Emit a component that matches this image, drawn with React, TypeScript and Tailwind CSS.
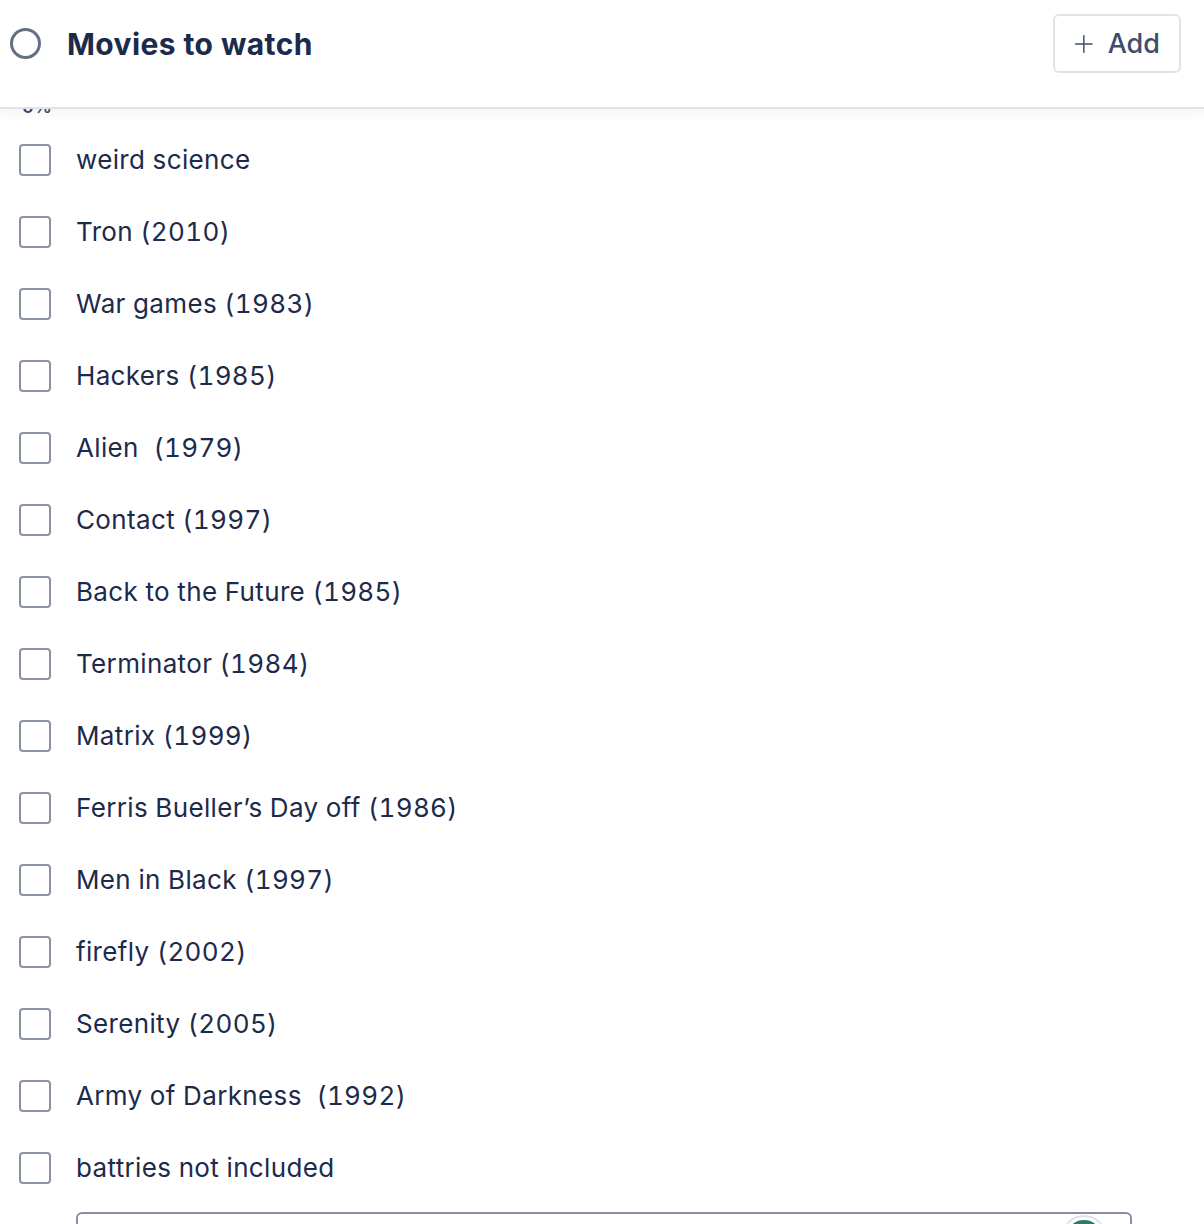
import React from 'react';

const movies = [
  'weird science',
  'Tron (2010)',
  'War games (1983)',
  'Hackers (1985)',
  'Alien  (1979)',
  'Contact (1997)',
  'Back to the Future (1985)',
  'Terminator (1984)',
  'Matrix (1999)',
  'Ferris Bueller\u2019s Day off (1986)',
  'Men in Black (1997)',
  'firefly (2002)',
  'Serenity (2005)',
  'Army of Darkness  (1992)',
  'battries not included',
];

const App: React.FC = () => {
  return (
    <div className="min-h-screen bg-white text-[#1c2a4b]" style={{ fontFamily: 'Inter, "Noto Sans", sans-serif' }}>
      {/* sticky list header */}
      <header className="sticky top-0 z-10 h-[109px] bg-white border-b-2 border-[#e1e2e8] shadow-[0_5px_10px_rgba(30,40,70,0.05)] flex items-start">
        <div className="flex items-center w-full pl-[10px] pr-[23px] pt-[14px]">
          <span className="w-[31px] h-[31px] rounded-full border-[3px] border-[#667085] shrink-0" />
          <h1 className="ml-[26px] text-[30px] font-bold tracking-[0.4px] text-[#1c2a4b] leading-none">Movies to watch</h1>
          <button className="ml-auto flex items-center h-[59px] w-[128px] px-[19px] border-2 border-[#e2e3e8] rounded-md text-[#3f4d6b]">
            <svg className="w-[26px] h-[26px]" viewBox="0 0 24 24" fill="none" stroke="currentColor" strokeWidth={1.8} strokeLinecap="round">
              <path d="M12 2v20M2 12h20" />
            </svg>
            <span className="ml-[14px] text-[27px] font-medium leading-none">Add</span>
          </button>
        </div>
      </header>

      <main className="-mt-[13px] pl-[19px] pr-[72px]">
        <div className="pl-[3px] text-[18px] leading-[22px] font-semibold text-[#3f4d6b]">0%</div>
        <ul className="mt-[6px]">
          {movies.map((m) => (
            <li key={m} className="h-[72px] flex items-center">
              <span className="w-[32px] h-[32px] rounded-[4px] border-2 border-[#8a93a5] shrink-0" />
              <span className="ml-[25px] text-[26px] leading-none tracking-[0.35px] tabular-nums whitespace-pre">{m}</span>
            </li>
          ))}
        </ul>

        {/* new item input */}
        <div className="ml-[57px] mt-[8px] h-[64px] border-2 border-[#858fa1] rounded-md flex items-start justify-end pr-[23px] pt-[1px]">
          <span className="w-[46px] h-[46px] rounded-full border-2 border-[#dfe2e8] p-[3px] bg-white">
            <span className="block w-full h-full rounded-full bg-[#2f7a66]" />
          </span>
        </div>
      </main>
    </div>
  );
};

export default App;
